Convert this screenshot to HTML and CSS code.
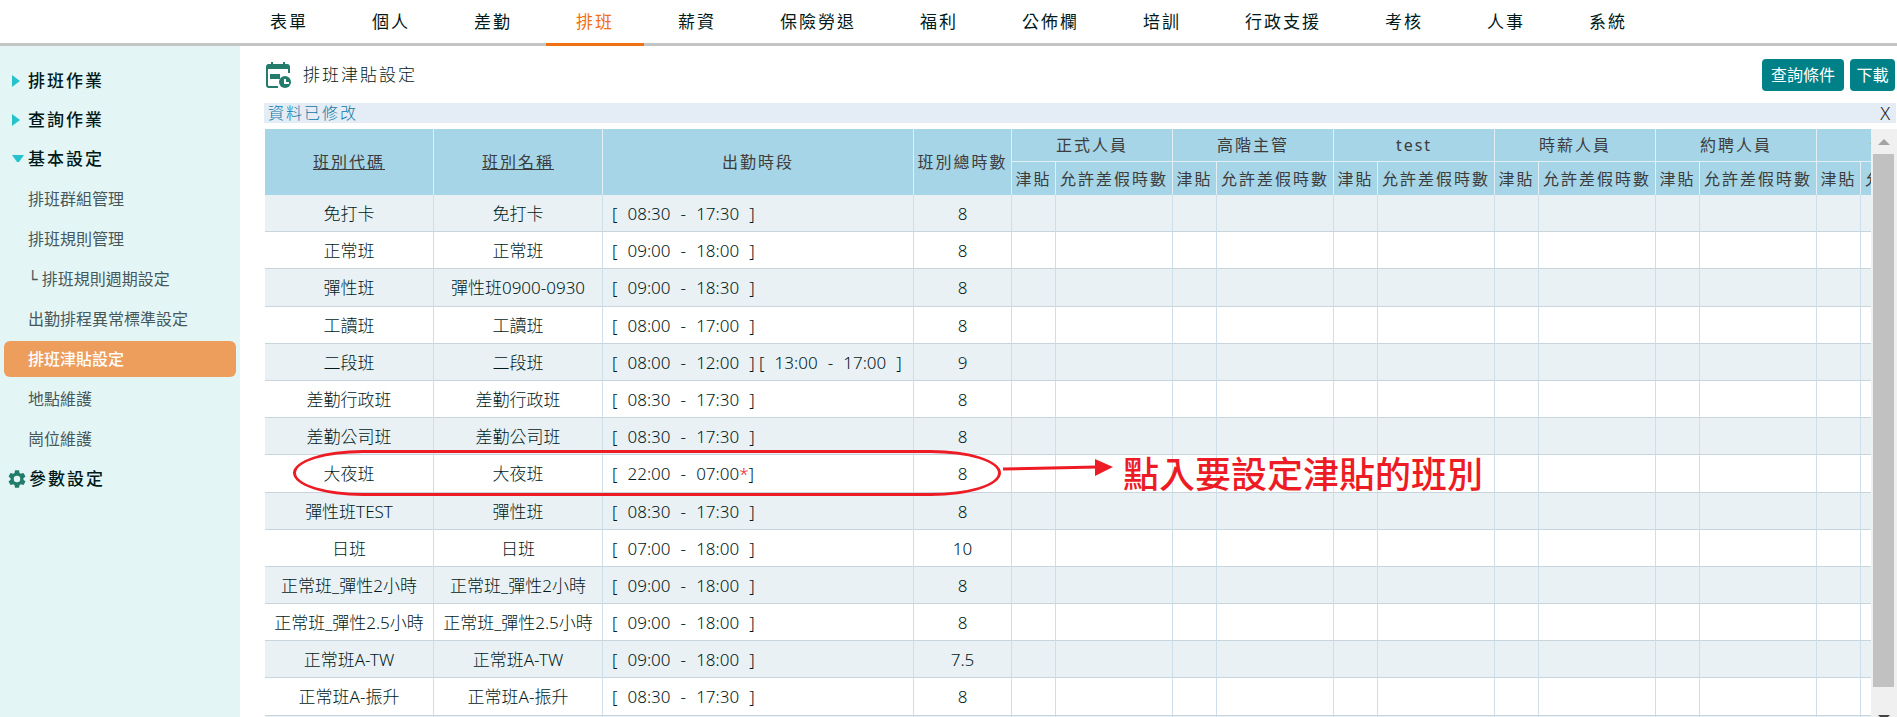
FILE: index.html
```html
<!DOCTYPE html>
<html lang="zh-Hant">
<head>
<meta charset="utf-8">
<title>排班津貼設定</title>
<link rel="stylesheet" href="styles.css">
</head>
<body>
<nav class="topnav">
  <a href="#">表單</a>
  <a href="#">個人</a>
  <a href="#">差勤</a>
  <a href="#" class="is-current">排班</a>
  <a href="#">薪資</a>
  <a href="#">保險勞退</a>
  <a href="#">福利</a>
  <a href="#">公佈欄</a>
  <a href="#">培訓</a>
  <a href="#">行政支援</a>
  <a href="#">考核</a>
  <a href="#">人事</a>
  <a href="#">系統</a>
</nav>
<div class="layout">
  <nav class="sidebar">
    <a href="#" class="group"><svg class="caret" viewBox="0 0 16 16"><path d="M4 2l8 6-8 6z"/></svg>排班作業</a>
    <a href="#" class="group"><svg class="caret" viewBox="0 0 16 16"><path d="M4 2l8 6-8 6z"/></svg>查詢作業</a>
    <a href="#" class="group"><svg class="caret" viewBox="0 0 16 16"><path d="M4 4h12l-5 7H9z"/></svg>基本設定</a>
    <div class="subitems">
      <a href="#">排班群組管理</a>
      <a href="#">排班規則管理</a>
      <a href="#"><span class="branch">└</span> 排班規則週期設定</a>
      <a href="#">出勤排程異常標準設定</a>
      <a href="#" class="is-active">排班津貼設定</a>
      <a href="#">地點維護</a>
      <a href="#">崗位維護</a>
    </div>
    <a href="#" class="group"><svg class="gear" viewBox="2 2 20 20"><path d="M19.14 12.94c.04-.3.06-.61.06-.94s-.02-.64-.07-.94l2.03-1.58a.49.49 0 0 0 .12-.61l-1.92-3.32a.49.49 0 0 0-.59-.22l-2.39.96a7 7 0 0 0-1.62-.94l-.36-2.54a.48.48 0 0 0-.48-.41h-3.84a.48.48 0 0 0-.47.41l-.36 2.54c-.59.24-1.13.57-1.62.94l-2.39-.96a.48.48 0 0 0-.59.22L2.74 8.87a.48.48 0 0 0 .12.61l2.03 1.58a6 6 0 0 0 0 1.88l-2.03 1.58a.49.49 0 0 0-.12.61l1.92 3.32c.12.22.37.29.59.22l2.39-.96c.5.38 1.03.7 1.62.94l.36 2.54c.05.24.24.41.48.41h3.84c.24 0 .44-.17.47-.41l.36-2.54a7 7 0 0 0 1.62-.94l2.39.96c.22.08.47 0 .59-.22l1.92-3.32a.48.48 0 0 0-.12-.61zM12 15.6a3.6 3.6 0 1 1 0-7.2 3.6 3.6 0 0 1 0 7.2z"/></svg>參數設定</a>
  </nav>
  <main class="main">
    <header class="title-row">
      <svg class="title-icon" viewBox="0 0 28 28"><path fill="#237c6b" d="M3 3h3V1h2v2h10V1h2v2h2a3 3 0 0 1 3 3v2H1V6a3 3 0 0 1 2-3z"/><path fill="none" stroke="#237c6b" stroke-width="2" d="M2 7v17a2 2 0 0 0 2 2h9M24 7v5"/><path fill="#237c6b" d="M5 13h10v5H5z"/><circle cx="20" cy="21" r="6" fill="#237c6b"/><path fill="none" stroke="#fff" stroke-width="2" d="M20 18v4h4"/></svg>
      <h1>排班津貼設定</h1>
      <button type="button" class="btn btn-query">查詢條件</button>
      <button type="button" class="btn">下載</button>
    </header>
    <div class="notice"><span>資料已修改</span><button type="button" aria-label="關閉">X</button></div>
    <section class="grid">
      <div class="grid-view">
        <table>
          <colgroup><col class="c-name" span="2"><col class="c-time"><col class="c-total"></colgroup>
          <colgroup><col class="c-pay"><col class="c-hours"></colgroup>
          <colgroup><col class="c-pay"><col class="c-hours"></colgroup>
          <colgroup><col class="c-pay"><col class="c-hours"></colgroup>
          <colgroup><col class="c-pay"><col class="c-hours"></colgroup>
          <colgroup><col class="c-pay"><col class="c-hours"></colgroup>
          <colgroup><col class="c-pay"><col class="c-hours"></colgroup>
          <thead>
            <tr><th rowspan="2"><a href="#">班別代碼</a></th><th rowspan="2"><a href="#">班別名稱</a></th><th rowspan="2">出勤時段</th><th rowspan="2">班別總時數</th><th colspan="2" class="th-group">正式人員</th><th colspan="2" class="th-group">高階主管</th><th colspan="2" class="th-group">test</th><th colspan="2" class="th-group">時薪人員</th><th colspan="2" class="th-group">約聘人員</th><th colspan="2" class="th-group">派遣員</th></tr>
            <tr><th>津貼</th><th>允許差假時數</th><th>津貼</th><th>允許差假時數</th><th>津貼</th><th>允許差假時數</th><th>津貼</th><th>允許差假時數</th><th>津貼</th><th>允許差假時數</th><th>津貼</th><th>允許差假時數</th></tr>
          </thead>
          <tbody>
            <tr><td>免打卡</td><td>免打卡</td><td class="time">[&nbsp;&#8196;08:30&nbsp;&#8196;-&nbsp;&#8196;17:30&nbsp;&#8196;]</td><td>8</td><td></td><td></td><td></td><td></td><td></td><td></td><td></td><td></td><td></td><td></td><td></td><td></td></tr>
            <tr><td>正常班</td><td>正常班</td><td class="time">[&nbsp;&#8196;09:00&nbsp;&#8196;-&nbsp;&#8196;18:00&nbsp;&#8196;]</td><td>8</td><td></td><td></td><td></td><td></td><td></td><td></td><td></td><td></td><td></td><td></td><td></td><td></td></tr>
            <tr><td>彈性班</td><td>彈性班0900-0930</td><td class="time">[&nbsp;&#8196;09:00&nbsp;&#8196;-&nbsp;&#8196;18:30&nbsp;&#8196;]</td><td>8</td><td></td><td></td><td></td><td></td><td></td><td></td><td></td><td></td><td></td><td></td><td></td><td></td></tr>
            <tr><td>工讀班</td><td>工讀班</td><td class="time">[&nbsp;&#8196;08:00&nbsp;&#8196;-&nbsp;&#8196;17:00&nbsp;&#8196;]</td><td>8</td><td></td><td></td><td></td><td></td><td></td><td></td><td></td><td></td><td></td><td></td><td></td><td></td></tr>
            <tr><td>二段班</td><td>二段班</td><td class="time">[&nbsp;&#8196;08:00&nbsp;&#8196;-&nbsp;&#8196;12:00&nbsp;&#8196;] [&nbsp;&#8196;13:00&nbsp;&#8196;-&nbsp;&#8196;17:00&nbsp;&#8196;]</td><td>9</td><td></td><td></td><td></td><td></td><td></td><td></td><td></td><td></td><td></td><td></td><td></td><td></td></tr>
            <tr><td>差勤行政班</td><td>差勤行政班</td><td class="time">[&nbsp;&#8196;08:30&nbsp;&#8196;-&nbsp;&#8196;17:30&nbsp;&#8196;]</td><td>8</td><td></td><td></td><td></td><td></td><td></td><td></td><td></td><td></td><td></td><td></td><td></td><td></td></tr>
            <tr><td>差勤公司班</td><td>差勤公司班</td><td class="time">[&nbsp;&#8196;08:30&nbsp;&#8196;-&nbsp;&#8196;17:30&nbsp;&#8196;]</td><td>8</td><td></td><td></td><td></td><td></td><td></td><td></td><td></td><td></td><td></td><td></td><td></td><td></td></tr>
            <tr><td>大夜班</td><td>大夜班</td><td class="time">[&nbsp;&#8196;22:00&nbsp;&#8196;-&nbsp;&#8196;07:00<span class="next-day">*</span>]</td><td>8</td><td></td><td></td><td></td><td></td><td></td><td></td><td></td><td></td><td></td><td></td><td></td><td></td></tr>
            <tr><td>彈性班TEST</td><td>彈性班</td><td class="time">[&nbsp;&#8196;08:30&nbsp;&#8196;-&nbsp;&#8196;17:30&nbsp;&#8196;]</td><td>8</td><td></td><td></td><td></td><td></td><td></td><td></td><td></td><td></td><td></td><td></td><td></td><td></td></tr>
            <tr><td>日班</td><td>日班</td><td class="time">[&nbsp;&#8196;07:00&nbsp;&#8196;-&nbsp;&#8196;18:00&nbsp;&#8196;]</td><td>10</td><td></td><td></td><td></td><td></td><td></td><td></td><td></td><td></td><td></td><td></td><td></td><td></td></tr>
            <tr><td>正常班_彈性2小時</td><td>正常班_彈性2小時</td><td class="time">[&nbsp;&#8196;09:00&nbsp;&#8196;-&nbsp;&#8196;18:00&nbsp;&#8196;]</td><td>8</td><td></td><td></td><td></td><td></td><td></td><td></td><td></td><td></td><td></td><td></td><td></td><td></td></tr>
            <tr><td>正常班_彈性2.5小時</td><td>正常班_彈性2.5小時</td><td class="time">[&nbsp;&#8196;09:00&nbsp;&#8196;-&nbsp;&#8196;18:00&nbsp;&#8196;]</td><td>8</td><td></td><td></td><td></td><td></td><td></td><td></td><td></td><td></td><td></td><td></td><td></td><td></td></tr>
            <tr><td>正常班A-TW</td><td>正常班A-TW</td><td class="time">[&nbsp;&#8196;09:00&nbsp;&#8196;-&nbsp;&#8196;18:00&nbsp;&#8196;]</td><td>7.5</td><td></td><td></td><td></td><td></td><td></td><td></td><td></td><td></td><td></td><td></td><td></td><td></td></tr>
            <tr><td>正常班A-振升</td><td>正常班A-振升</td><td class="time">[&nbsp;&#8196;08:30&nbsp;&#8196;-&nbsp;&#8196;17:30&nbsp;&#8196;]</td><td>8</td><td></td><td></td><td></td><td></td><td></td><td></td><td></td><td></td><td></td><td></td><td></td><td></td></tr>
            <tr><td>&nbsp;</td><td></td><td></td><td></td><td></td><td></td><td></td><td></td><td></td><td></td><td></td><td></td><td></td><td></td><td></td><td></td></tr>
          </tbody>
        </table>
      </div>
      <div class="scrollbar" aria-hidden="true">
        <svg class="scroll-up" viewBox="0 0 12 6"><path d="M6 0l6 6H0z"/></svg>
        <div class="thumb"></div>
        <svg class="scroll-down" viewBox="0 0 12 6"><path d="M0 0h12L6 6z"/></svg>
      </div>
      <div class="mark-ring"></div>
      <svg class="mark-arrow" viewBox="0 0 112 18"><path d="M1 10L95 8" fill="none" stroke="#ed1c24" stroke-width="3"/><path d="M93 0l18 8-18 9z" fill="#ed1c24"/></svg>
      <p class="mark-text">點入要設定津貼的班別</p>
    </section>
  </main>
</div>
</body>
</html>
```
FILE: styles.css
```css
* { box-sizing: border-box; }

body {
  margin: 0;
  height: 100vh;
  display: flex;
  flex-direction: column;
  overflow: hidden;
  background: #fff;
  color: #001a1a;
  font-family: "Noto Sans", "Noto Sans CJK TC", sans-serif;
  font-size: 17px;
  line-height: 24px;
}

a { color: inherit; text-decoration: none; }
button { font: inherit; border: 0; padding: 0; cursor: pointer; }

.topnav {
  flex: none;
  display: flex;
  gap: 4px;
  height: 46px;
  padding-left: 240px;
  box-shadow: inset 0 -3px #c3c4c4;
  letter-spacing: 2px;
}
.topnav a {
  padding: 10px 30px 9px;
  border-bottom: 3px solid transparent;
}
.topnav .is-current { color: #f07014; border-color: #f07014; }

.layout { flex: 1; display: flex; min-height: 0; }

.sidebar {
  flex: none;
  width: 240px;
  padding-top: 15px;
  background: #e4f5f5;
}
.group {
  display: flex;
  align-items: center;
  gap: 4px;
  height: 39px;
  padding-left: 8px;
  font-weight: 500;
  letter-spacing: 2px;
}
.caret { width: 16px; height: 16px; fill: #27c3cc; }
.gear { width: 18px; height: 18px; margin-right: -1px; fill: #237c6b; }
.subitems {
  display: flex;
  flex-direction: column;
  gap: 4px;
  padding: 3px 4px 2px;
  color: #46585b;
  font-size: 16px;
}
.subitems a { height: 36px; padding: 6px 24px; border-radius: 6px; white-space: nowrap; }
.subitems .is-active { background: #ed9d5c; color: #fff; font-weight: 500; }
.branch { font-family: "DejaVu Sans Mono", monospace; }

.main {
  flex: 1;
  min-width: 0;
  display: flex;
  flex-direction: column;
  padding-left: 24px;
}
.title-row {
  flex: none;
  display: flex;
  align-items: center;
  gap: 6px;
  height: 57px;
  padding-right: 2px;
}
.title-icon { width: 28px; height: 28px; margin-left: 1px; }
.title-row h1 {
  flex: 1;
  margin: 0 0 0 4px;
  font-size: 17px;
  font-weight: 300;
  letter-spacing: 2px;
}
.btn {
  min-width: 45px;
  height: 32px;
  padding: 0 6px;
  border-radius: 4px;
  background: #008187;
  color: #fff;
  font-size: 16px;
}
.btn-query { min-width: 82px; }

.notice {
  flex: none;
  display: flex;
  justify-content: space-between;
  height: 20px;
  margin: 0 1px 6px 0;
  padding: 0 6px 0 4px;
  background: #e4ecf5;
  color: #0b78a6;
  font-size: 16px;
  font-weight: 300;
  line-height: 20px;
  letter-spacing: 2px;
}
.notice button { background: none; color: #222; font-size: 18px; line-height: 20px; }

.grid {
  position: relative;
  flex: 1;
  display: flex;
  min-height: 0;
  padding-left: 1px;
}
.grid-view { flex: 1; min-width: 0; overflow: hidden; }

table { table-layout: fixed; width: 1713px; border-spacing: 0; }
.c-name { width: 169px; }
.c-time { width: 311px; }
.c-total { width: 98px; }
.c-pay { width: 44px; }
.c-hours { width: 117px; }

th {
  height: 33px;
  padding: 0;
  background: #a6d5e7;
  border-right: 1px solid #e4eff5;
  color: #3c3c3c;
  font-size: 16px;
  font-weight: 400;
  letter-spacing: 2px;
  white-space: nowrap;
}
th a { text-decoration: underline; }
.th-group { border-bottom: 1px solid #e4eff5; }

td {
  padding: 5px 0 4px;
  border-right: 1px solid #cfdfe9;
  border-bottom: 1px solid #c8d5dc;
  font-weight: 300;
  line-height: 1.6;
  text-align: center;
  white-space: nowrap;
}
tbody tr:nth-child(odd) { background: #e9f1f5; }
.time { padding-left: 9px; text-align: left; }
.next-day { color: #ed1c24; }

.scrollbar {
  flex: none;
  width: 26px;
  display: flex;
  flex-direction: column;
  padding: 10px 3px 0 2px;
  background: #f0f0f0;
}
.scroll-up, .scroll-down { flex: none; align-self: center; width: 12px; height: 6px; }
.scroll-up { fill: #a3a3a3; }
.scroll-down { fill: #444; margin-bottom: -4px; }
.thumb { flex: 1; margin: 9px 0 28px; background: #c1c1c1; }

.mark-ring {
  position: absolute;
  left: 29px;
  top: 321px;
  width: 708px;
  height: 46px;
  border: 3px solid #ed1c24;
  border-radius: 70px / 23px;
}
.mark-arrow { position: absolute; left: 738px; top: 330px; width: 112px; height: 18px; }
.mark-text {
  position: absolute;
  left: 859px;
  top: 326px;
  margin: 0;
  color: #ed1c24;
  font-size: 36px;
  font-weight: 500;
  line-height: 40px;
  white-space: nowrap;
}
```
